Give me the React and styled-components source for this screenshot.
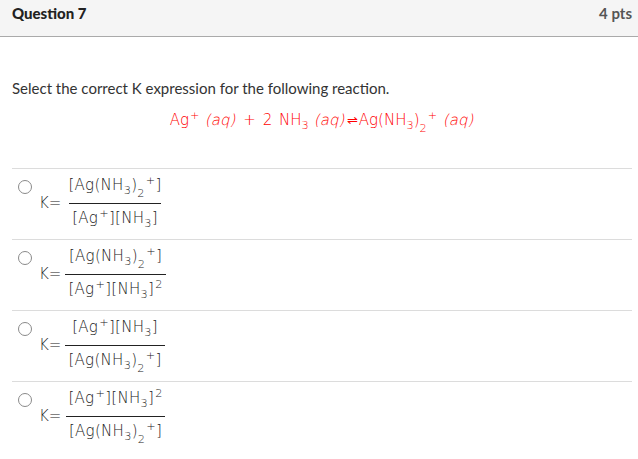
import React from "react";
import styled, { createGlobalStyle } from "styled-components";

const Global = createGlobalStyle`
  html, body { margin: 0; padding: 0; background: #fff; }
  body { font-family: Lato, "Liberation Sans", Arial, sans-serif; color: #2d3b45; }
`;

const Page = styled.div`
  width: 638px;
`;

const Header = styled.div`
  height: 37px;
  background: #f5f5f5;
  border-bottom: 1px solid #aaaaaa;
  display: flex;
  align-items: flex-start;
  justify-content: space-between;
  padding: 4px 6px 0 12px;
  box-sizing: border-box;
`;

const Title = styled.div`
  font-weight: 900;
  font-size: 15px;
  color: #222;
`;

const Points = styled.div`
  font-weight: 700;
  font-size: 15px;
  color: #555;
`;

const Body = styled.div`
  padding: 0 6px 0 12px;
`;

const Prompt = styled.div`
  padding-top: 42px;
  font-size: 15px;
  color: #333;
  line-height: 18px;
`;

const MathText = styled.div`
  font-family: "DejaVu Sans", sans-serif;
  font-weight: 200;
  font-size: 15px;
`;

const Equation = styled(MathText)`
  color: #ff0000;
  text-align: center;
  margin-top: 13px;
  height: 40px;
  line-height: 20px;
  word-spacing: 2px;
`;

const Aq = styled.span`
  display: inline-block;
  transform: skewX(-13deg);
  word-spacing: 0;
`;

const Sub = styled.sub`
  font-size: 0.75em;
  vertical-align: ${(p) => (p.$deep ? "-0.62em" : "-0.35em")};
  line-height: 0;
`;

const Sup = styled.sup`
  font-size: 0.75em;
  vertical-align: 0.55em;
  line-height: 0;
  padding-left: 1px;
`;

const Arrow = styled.span`
  font-size: 0.85em;
  padding: 0 1px;
`;

const Options = styled.div`
  margin-top: 18px;
`;

const Option = styled.div`
  border-top: 1px solid #dcdcdc;
  height: 71px;
  display: flex;
  align-items: flex-start;
  padding-left: 6px;
  box-sizing: border-box;
`;

const Radio = styled.span`
  width: 12px;
  height: 12px;
  border: 1px solid #8a8a8a;
  border-radius: 50%;
  margin-top: 11px;
  flex: none;
  background: #fff;
`;

const Expr = styled(MathText)`
  display: flex;
  align-items: center;
  margin-top: 7px;
  margin-left: 7px;
  color: #222;
`;

const KLabel = styled.span`
  margin-top: 3px;
  margin-right: 4px;
`;

const Fraction = styled.span`
  display: inline-flex;
  flex-direction: column;
  align-items: center;
  letter-spacing: 0.3px;
`;

const Num = styled.span`
  padding: 0 3px 9px;
  line-height: 18px;
  white-space: nowrap;
`;

const Den = styled.span`
  border-top: 1px solid #222;
  padding: 5px 3px 0;
  line-height: 18px;
  white-space: nowrap;
`;

const Complex = () => (
  <>
    [Ag(NH<Sub>3</Sub>)<Sub $deep>2</Sub>
    <Sup>+</Sup>]
  </>
);

const Ions = ({ squared }) => (
  <>
    [Ag<Sup>+</Sup>][NH<Sub>3</Sub>]{squared && <Sup>2</Sup>}
  </>
);

const options = [
  { num: <Complex />, den: <Ions /> },
  { num: <Complex />, den: <Ions squared /> },
  { num: <Ions />, den: <Complex /> },
  { num: <Ions squared />, den: <Complex /> },
];

export default function App() {
  return (
    <Page>
      <Global />
      <Header>
        <Title>Question 7</Title>
        <Points>4 pts</Points>
      </Header>
      <Body>
        <Prompt>Select the correct K expression for the following reaction.</Prompt>
        <Equation>
          Ag<Sup>+</Sup> <Aq>(aq)</Aq> + 2 NH<Sub>3</Sub> <Aq>(aq)</Aq>
          <Arrow>⇌</Arrow>Ag(NH<Sub>3</Sub>)<Sub $deep>2</Sub>
          <Sup>+</Sup> <Aq>(aq)</Aq>
        </Equation>
        <Options>
          {options.map((o, i) => (
            <Option key={i}>
              <Radio />
              <Expr>
                <KLabel>K=</KLabel>
                <Fraction>
                  <Num>{o.num}</Num>
                  <Den>{o.den}</Den>
                </Fraction>
              </Expr>
            </Option>
          ))}
        </Options>
      </Body>
    </Page>
  );
}
